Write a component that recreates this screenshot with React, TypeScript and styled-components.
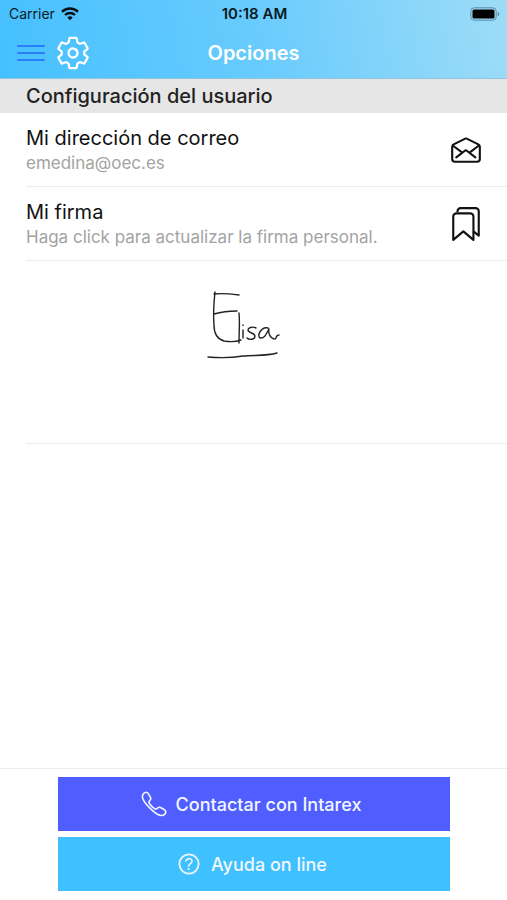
import React from "react";
import styled, { createGlobalStyle } from "styled-components";
import {
  IoBookmarksOutline,
  IoHelpCircleOutline,
  IoMailOpenOutline,
  IoSettingsOutline,
} from "react-icons/io5";

const GlobalStyle = createGlobalStyle`
  * { box-sizing: border-box; }
  body { margin: 0; background: #fff; font-family: Inter, "Liberation Sans", sans-serif; color: #111; }
  button { font: inherit; color: inherit; border: 0; padding: 0; background: none; cursor: pointer; }
  h1, h2 { margin: 0; font: inherit; }
`;

const Screen = styled.div`
  display: flex;
  flex-direction: column;
  min-height: 100vh;
`;

const Header = styled.header`
  background: linear-gradient(80deg, #45c0ff 0%, #68cbfd 50%, #9edcf7 100%);
  border-bottom: 1px solid #8fc4dc;
`;

const StatusBar = styled.div`
  display: grid;
  grid-template-columns: 1fr auto 1fr;
  align-items: center;
  height: 27px;
  padding: 0 7px 0 9px;
  font-size: 14px;
  color: #0b1a24;
`;

const Carrier = styled.span`
  display: flex;
  align-items: center;
  gap: 6px;
`;

const Clock = styled.time`
  font-size: 15px;
  font-weight: 600;
`;

const Battery = styled.svg`
  justify-self: end;
`;

const NavBar = styled.nav`
  display: grid;
  grid-template-columns: 1fr auto 1fr;
  align-items: center;
  height: 51px;
  padding: 0 16px;
`;

const NavActions = styled.div`
  display: flex;
  align-items: center;
  gap: 9px;
`;

const IconButton = styled.button`
  && {
    display: flex;
    color: #fff;
  }
`;

const Title = styled.h1`
  && {
    font-size: 20px;
    font-weight: 600;
    color: #fff;
  }
`;

const SectionTitle = styled.h2`
  && {
    padding: 0 26px;
    background: #e6e6e6;
    font-size: 20px;
    font-weight: 500;
    line-height: 34px;
    color: #222;
  }
`;

const List = styled.main`
  flex: 1;
  padding-left: 26px;
`;

const Row = styled.button`
  && {
    display: flex;
    align-items: center;
    justify-content: space-between;
    width: 100%;
    height: 74px;
    padding: 0 24px 0 0;
    border-bottom: 1px solid #ececec;
    text-align: left;
  }
`;

const RowText = styled.span`
  display: flex;
  flex-direction: column;
`;

const RowLabel = styled.span`
  font-size: 20px;
  line-height: 26px;
`;

const RowDetail = styled.span`
  font-size: 17px;
  line-height: 24px;
  color: #a3a3a3;
`;

const Signature = styled.div`
  display: flex;
  justify-content: center;
  height: 183px;
  padding: 30px 44px 0 0;
  border-bottom: 1px solid #ececec;
`;

const Footer = styled.footer`
  display: flex;
  flex-direction: column;
  gap: 6px;
  padding: 8px 57px 9px 58px;
  border-top: 1px solid #ececec;
`;

const Action = styled.button<{ $tone: string; $gap: number }>`
  && {
    display: flex;
    align-items: center;
    justify-content: center;
    gap: ${(p) => p.$gap}px;
    height: 54px;
    padding-right: 6px;
    background: ${(p) => p.$tone};
    color: #f2f6ff;
    font-size: 18px;
    font-weight: 500;
  }
`;

const WifiIcon = () => (
  <svg width="18" height="14" viewBox="0 0 18 14" fill="none" stroke="#081018" aria-hidden="true">
    <path d="M1 4.8a11.5 11.5 0 0 1 16 0" strokeWidth="2.5" />
    <path d="M4 8a7.3 7.3 0 0 1 10 0" strokeWidth="2.4" />
    <path d="M6.3 10.4a4 4 0 0 1 5.4 0L9 13.3z" fill="#081018" stroke="none" />
  </svg>
);

const BatteryIcon = () => (
  <Battery width="30" height="14" viewBox="0 0 30 14" role="img" aria-label="Battery full">
    <rect x=".8" y=".8" width="25.4" height="12.4" rx="3.4" fill="none" stroke="#5d8ca3" />
    <rect x="2.5" y="2.5" width="22" height="9" rx="1.6" fill="#000" />
    <path d="M27.7 4.7c2 .8 2 3.8 0 4.6z" fill="#5d8ca3" />
  </Battery>
);

const MenuIcon = () => (
  <svg width="30" height="20" viewBox="0 0 30 20" stroke="#2c7dfa" strokeWidth="2" strokeLinecap="round" aria-hidden="true">
    <path d="M2 3h26M2 10h26M2 17h26" />
  </svg>
);

const PhoneIcon = () => (
  <svg width="26" height="26" viewBox="0 0 26 26" fill="none" stroke="#f2f6ff" strokeWidth="1.6" strokeLinejoin="round" aria-hidden="true">
    <path d="M1.800 3.600C2.500 2.200 3.900 1.200 5.200 1.200c1.400 0 2 .9 2.600 2.100l1.700 3.200c.7 1.400.4 2.100-.8 3.200-1 .9-1 1.600-.3 2.800 1.300 2 3.100 3.800 5.100 5.100 1.200.8 1.900.7 2.800-.3 1.100-1.100 1.800-1.500 3.200-.8l3.200 1.700c1.200.6 2.100 1.200 2.100 2.600 0 1.500-1.200 2.900-2.600 3.400-2.800.9-6.600-.8-10.600-4.500C7 15.500 3 11.500 1.800 7.500 1.400 6 1.300 4.700 1.800 3.600z" />
  </svg>
);

const SignatureDrawing = () => (
  <svg width="76" height="72" viewBox="0 0 76 72" fill="none" stroke="#222" strokeWidth="1.4" strokeLinecap="round" strokeLinejoin="round" role="img" aria-label="Elisa">
    <path d="M7 3C15 2 24 3 32 4M8 1C7 10 6 22 7 34c0 8 3 14 10 16 6 1 12 1 17-1M7 23c7-2 15-3 23-3M32 22c1 9 0 19 0 30" />
    <path d="M36 39v8M36 34v.5M49 37c-4-2-8 0-8 2 0 3 7 3 7 6 0 4-6 4-8 2M61 37c-4-1-8 2-9 6-1 5 3 5 6 2l4-7c-1 4 1 9 5 10 3 1 1-4 5-4" />
    <path d="M1 66c12 1 23 1 35-1 12-1 24 0 34-3" />
  </svg>
);

export default function App() {
  return (
    <>
      <GlobalStyle />
      <Screen>
        <Header>
          <StatusBar>
            <Carrier>Carrier <WifiIcon /></Carrier>
            <Clock>10:18 AM</Clock>
            <BatteryIcon />
          </StatusBar>
          <NavBar>
            <NavActions>
              <IconButton aria-label="Menú"><MenuIcon /></IconButton>
              <IconButton aria-label="Ajustes"><IoSettingsOutline size={36} /></IconButton>
            </NavActions>
            <Title>Opciones</Title>
          </NavBar>
        </Header>
        <SectionTitle>Configuración del usuario</SectionTitle>
        <List>
          <Row>
            <RowText>
              <RowLabel>Mi dirección de correo</RowLabel>
              <RowDetail>emedina@oec.es</RowDetail>
            </RowText>
            <IoMailOpenOutline size={34} />
          </Row>
          <Row>
            <RowText>
              <RowLabel>Mi firma</RowLabel>
              <RowDetail>Haga click para actualizar la firma personal.</RowDetail>
            </RowText>
            <IoBookmarksOutline size={34} />
          </Row>
          <Signature><SignatureDrawing /></Signature>
        </List>
        <Footer>
          <Action $tone="#515eff" $gap={9}><PhoneIcon />Contactar con Intarex</Action>
          <Action $tone="#3fc1ff" $gap={8}><IoHelpCircleOutline size={28} />Ayuda on line</Action>
        </Footer>
      </Screen>
    </>
  );
}
